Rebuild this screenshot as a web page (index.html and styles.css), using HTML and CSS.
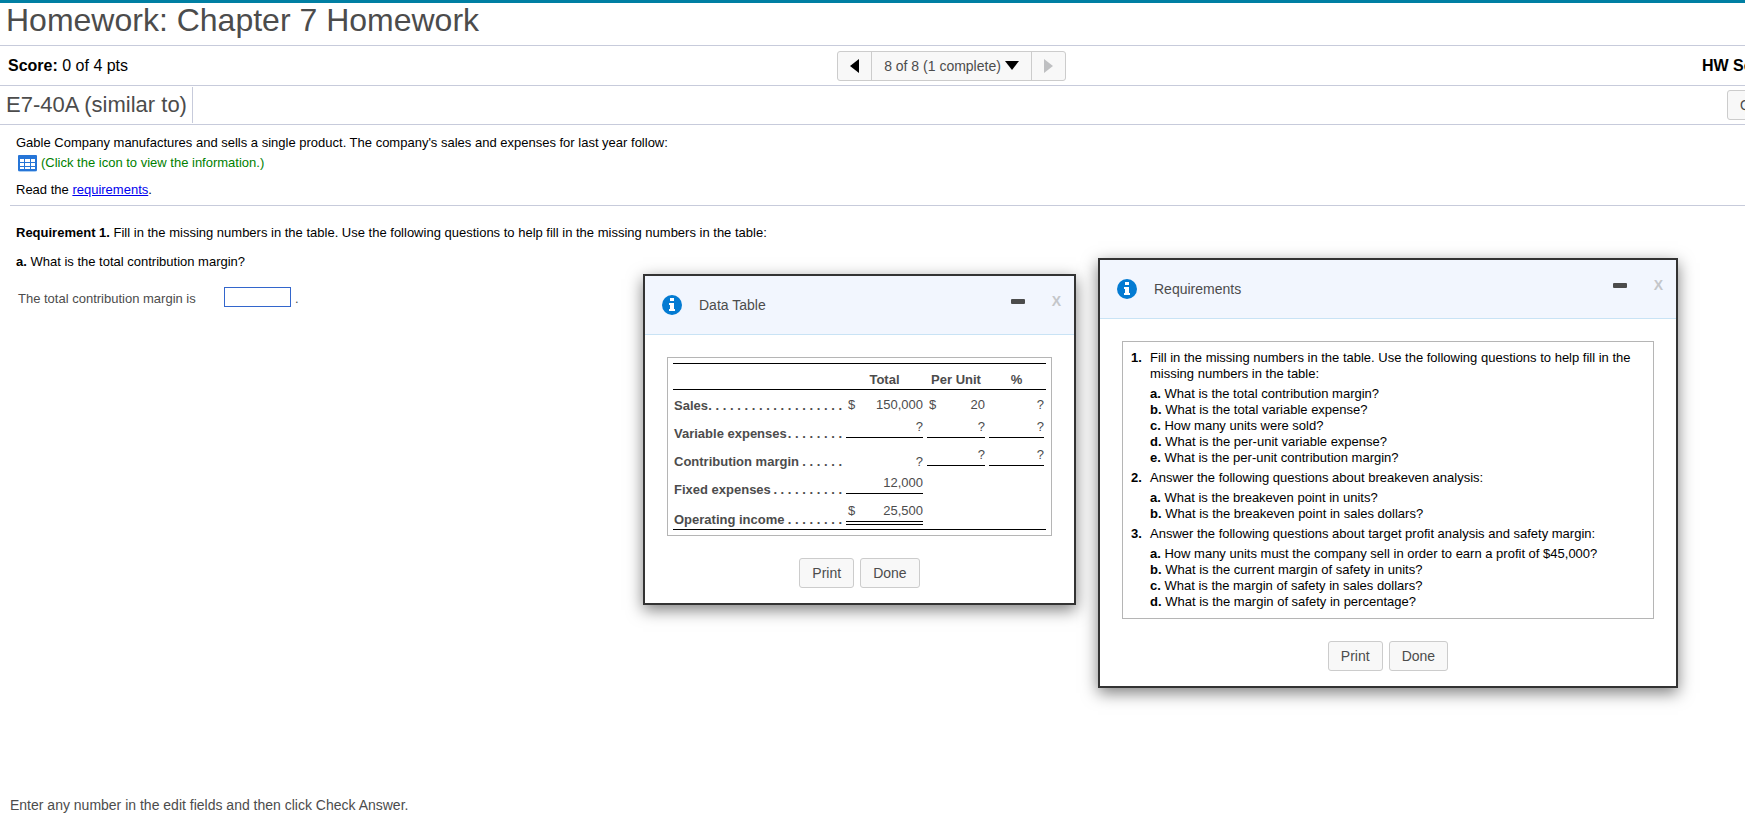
FILE: index.html
```html
<!DOCTYPE html>
<html lang="en">
<head>
    <meta charset="UTF-8">
    <meta name="viewport" content="width=device-width, initial-scale=1.0">
    <title>Homework: Chapter 7 Homework</title>
    <link rel="stylesheet" href="styles.css">
</head>
<body>
    <div class="page">
        <header class="title-bar">
            <h1>Homework: Chapter 7 Homework</h1>
        </header>

        <div class="score-bar">
            <div><b>Score:</b> 0 of 4 pts</div>
            <nav class="pager" aria-label="Questions">
                <button type="button" aria-label="Previous question">
                    <svg width="9" height="14" viewBox="0 0 9 14"><path d="M9 0v14L0 7z" fill="#000"/></svg>
                </button>
                <button type="button" class="pager-list">8 of 8 (1 complete)
                    <svg width="14" height="9" viewBox="0 0 14 9"><path d="M0 0h14L7 9z" fill="#000"/></svg>
                </button>
                <button type="button" aria-label="Next question" disabled>
                    <svg width="9" height="14" viewBox="0 0 9 14"><path d="M0 0v14l9-7z" fill="#bfc0c2"/></svg>
                </button>
            </nav>
            <div class="hw-score"><b>HW Score:</b></div>
        </div>

        <div class="exercise-bar">
            <h2>E7-40A (similar to)</h2>
            <button type="button" class="btn">Question Help</button>
        </div>

        <main>
            <section class="intro">
                <p>Gable Company manufactures and sells a single product. The company's sales and expenses for last year follow:</p>
                <p class="info">
                    <button type="button" class="table-icon" aria-label="View the information">
                        <svg width="19" height="17" viewBox="0 0 19 17">
                            <rect x="0" y="1" width="19" height="16" rx="2" fill="#a9cdf3"/>
                            <rect x="0" y="0" width="19" height="16" rx="1" fill="#2675d7"/>
                            <path d="M2 4h4v3H2zM7 4h5v3H7zM13 4h4v3h-4zM2 8h4v3H2zM7 8h5v3H7zM13 8h4v3h-4zM2 12h4v2H2zM7 12h5v2H7zM13 12h4v2h-4z" fill="#fff"/>
                        </svg>
                    </button>
                    (Click the icon to view the information.)
                </p>
                <p>Read the <a href="#requirements">requirements</a>.</p>
            </section>
            <section class="question">
                <p><b>Requirement 1.</b> Fill in the missing numbers in the table. Use the following questions to help fill in the missing numbers in the table:</p>
                <p><b>a.</b> What is the total contribution margin?</p>
                <div class="answer">
                    <label for="margin">The total contribution margin is</label>
                    <input type="text" id="margin">
                    <span>.</span>
                </div>
            </section>
        </main>

        <footer>Enter any number in the edit fields and then click Check Answer.</footer>
    </div>

    <section class="popup popup-data" aria-label="Data Table">
        <div class="popup-header">
            <svg width="20" height="20" viewBox="0 0 20 20"><circle cx="10" cy="10" r="10" fill="#047bd2"/><path d="M8 3h4v3H8zM7 8h5v6h1v2H7v-2h1v-4H7z" fill="#fff"/></svg>
            <h3>Data Table</h3>
            <button type="button" class="minimize" aria-label="Minimize"></button>
            <button type="button" class="close" aria-label="Close">X</button>
        </div>
        <div class="popup-body">
            <div class="box">
                <table>
                    <thead>
                        <tr>
                            <td></td>
                            <th class="total">Total</th>
                            <th class="unit">Per Unit</th>
                            <th class="percent">%</th>
                        </tr>
                    </thead>
                    <tbody>
                        <tr class="first">
                            <th scope="row"><div class="name"><span>Sales</span><span>. . . . . . . . . . . . . . . . . . .</span></div></th>
                            <td><div class="value"><span>$</span><span>150,000</span></div></td>
                            <td><div class="value"><span>$</span><span>20</span></div></td>
                            <td><div class="value">?</div></td>
                        </tr>
                        <tr>
                            <th scope="row"><div class="name"><span>Variable expenses</span><span>. . . . . . . .</span></div></th>
                            <td><div class="value line">?</div></td>
                            <td><div class="value line">?</div></td>
                            <td><div class="value line">?</div></td>
                        </tr>
                        <tr>
                            <th scope="row"><div class="name"><span>Contribution margin</span><span>. . . . . .</span></div></th>
                            <td><div class="value">?</div></td>
                            <td><div class="value line">?</div></td>
                            <td><div class="value line">?</div></td>
                        </tr>
                        <tr>
                            <th scope="row"><div class="name"><span>Fixed expenses</span><span>. . . . . . . . . .</span></div></th>
                            <td><div class="value line">12,000</div></td>
                            <td></td>
                            <td></td>
                        </tr>
                        <tr class="last">
                            <th scope="row"><div class="name"><span>Operating income</span><span>. . . . . . . .</span></div></th>
                            <td><div class="value double"><span>$</span><span>25,500</span></div></td>
                            <td></td>
                            <td></td>
                        </tr>
                    </tbody>
                </table>
            </div>
            <div class="buttons">
                <button type="button" class="btn">Print</button>
                <button type="button" class="btn">Done</button>
            </div>
        </div>
    </section>

    <section class="popup popup-req" id="requirements" aria-label="Requirements">
        <div class="popup-header">
            <svg width="20" height="20" viewBox="0 0 20 20"><circle cx="10" cy="10" r="10" fill="#047bd2"/><path d="M8 3h4v3H8zM7 8h5v6h1v2H7v-2h1v-4H7z" fill="#fff"/></svg>
            <h3>Requirements</h3>
            <button type="button" class="minimize" aria-label="Minimize"></button>
            <button type="button" class="close" aria-label="Close">X</button>
        </div>
        <div class="popup-body">
            <div class="box req-box">
                <ul class="req-list">
                    <li><b>1.</b>
                        <div>Fill in the missing numbers in the table. Use the following questions to help fill in the missing numbers in the table:
                            <ul>
                                <li><b>a.</b> What is the total contribution margin?</li>
                                <li><b>b.</b> What is the total variable expense?</li>
                                <li><b>c.</b> How many units were sold?</li>
                                <li><b>d.</b> What is the per-unit variable expense?</li>
                                <li><b>e.</b> What is the per-unit contribution margin?</li>
                            </ul>
                        </div>
                    </li>
                    <li><b>2.</b>
                        <div>Answer the following questions about breakeven analysis:
                            <ul>
                                <li><b>a.</b> What is the breakeven point in units?</li>
                                <li><b>b.</b> What is the breakeven point in sales dollars?</li>
                            </ul>
                        </div>
                    </li>
                    <li><b>3.</b>
                        <div>Answer the following questions about target profit analysis and safety margin:
                            <ul>
                                <li><b>a.</b> How many units must the company sell in order to earn a profit of $45,000?</li>
                                <li><b>b.</b> What is the current margin of safety in units?</li>
                                <li><b>c.</b> What is the margin of safety in sales dollars?</li>
                                <li><b>d.</b> What is the margin of safety in percentage?</li>
                            </ul>
                        </div>
                    </li>
                </ul>
            </div>
            <div class="buttons">
                <button type="button" class="btn">Print</button>
                <button type="button" class="btn">Done</button>
            </div>
        </div>
    </section>
</body>
</html>
```

FILE: styles.css
```css
* {
    box-sizing: border-box;
}
html {
    overflow: hidden;
}
body {
    margin: 0;
    background: #fff;
    color: #000;
    font-family: Arial, "Liberation Sans", sans-serif;
    font-size: 13px;
    line-height: 16px;
}
h1, h2, h3, p, ul {
    margin: 0;
    padding: 0;
    font-weight: normal;
}
ul {
    list-style: none;
}
button {
    font-family: inherit;
    font-size: 14px;
    color: #4c4c4c;
    cursor: pointer;
}

/* the page runs past the right edge of the window */
.page {
    display: flex;
    flex-direction: column;
    min-height: 100vh;
    margin-right: -158px;
    border-top: 3px solid #007fa3;
}
.title-bar {
    height: 43px;
    padding: 0 6px;
    border-bottom: 1px solid #c7cbdb;
}
h1 {
    font-size: 32px;
    line-height: 34px;
    color: #4c4c4c;
}
.score-bar {
    display: grid;
    grid-template-columns: 1fr auto 1fr;
    align-items: center;
    height: 40px;
    padding: 0 8px;
    border-bottom: 1px solid #c7cbdb;
    font-size: 16px;
}
.hw-score {
    justify-self: end;
    width: 193px;
}
.pager {
    display: flex;
    height: 30px;
    border: 1px solid #ccc;
    border-radius: 3px;
    background: #f8f8f8;
}
.pager button {
    display: flex;
    align-items: center;
    justify-content: center;
    gap: 4px;
    width: 33px;
    padding: 0;
    border: 0;
    background: none;
}
.pager .pager-list {
    width: 161px;
    border-left: 1px solid #ccc;
    border-right: 1px solid #ccc;
}
.exercise-bar {
    display: flex;
    align-items: center;
    justify-content: space-between;
    height: 39px;
    border-bottom: 1px solid #c7cbdb;
}
h2 {
    padding: 0 5px 0 6px;
    border-right: 1px solid #c7cbdb;
    font-size: 22px;
    line-height: 36px;
    color: #4c4c4c;
}
.exercise-bar .btn {
    width: 160px;
    margin-right: 16px;
    text-align: left;
}
.btn {
    height: 30px;
    padding: 0 12px;
    border: 1px solid #ccc;
    border-radius: 3px;
    background: #f8f8f8;
}

main {
    flex: 1;
    padding-left: 10px;
}
.intro {
    padding: 10px 6px 7px;
    border-bottom: 1px solid #c7cbdb;
}
.info {
    display: flex;
    gap: 4px;
    padding: 4px 2px 11px;
    color: #008000;
}
.table-icon {
    height: 16px;
    padding: 0;
    border: 0;
    background: none;
}
.intro a {
    color: #0000ee;
}
.question {
    padding: 19px 6px;
}
.question p {
    margin-bottom: 13px;
}
.answer {
    display: flex;
    align-items: flex-end;
    padding: 4px 2px;
    color: #4c4c4c;
}
.answer label {
    width: 206px;
}
.answer input {
    width: 67px;
    height: 20px;
    margin-right: 4px;
    border: 1px solid #3366cc;
}
footer {
    padding: 0 10px 2px;
    font-size: 14px;
    color: #4c4c4c;
}

/* floating windows */
.popup {
    position: absolute;
    border: 2px solid #333;
    background: #fff;
    box-shadow: 0 5px 15px rgba(0, 0, 0, 0.5);
}
.popup-data {
    top: 274px;
    left: 643px;
    width: 433px;
}
.popup-req {
    top: 258px;
    left: 1098px;
    width: 580px;
}
.popup-header {
    display: flex;
    align-items: center;
    height: 59px;
    padding: 0 13px 0 17px;
    border-bottom: 1px solid #c9e3f5;
    background: #f2f6fe;
}
h3 {
    flex: 1;
    padding-left: 17px;
    font-size: 14px;
    color: #4c4c4c;
}
.minimize {
    width: 14px;
    height: 5px;
    margin: 0 27px 7px 0;
    padding: 0;
    border: 0;
    border-radius: 1px;
    background: #4c4c4c;
}
.close {
    margin-bottom: 9px;
    padding: 0;
    border: 0;
    background: none;
    font-weight: bold;
    color: #c4c6ca;
}
.popup-body {
    padding: 22px 22px 15px;
}
.box {
    padding: 5px;
    border: 1px solid #b5b5b5;
}
.buttons {
    display: flex;
    justify-content: center;
    gap: 6px;
    margin-top: 22px;
}

table {
    width: 100%;
    border-top: 1px solid #000;
    border-bottom: 1px solid #000;
    border-spacing: 0;
    color: #4c4c4c;
}
th, td {
    padding: 0 2px;
    vertical-align: bottom;
}
tbody th {
    padding: 0 2px 0 1px;
}
thead th, thead td {
    height: 26px;
    padding-bottom: 1px;
    border-bottom: 1px solid #000;
}
.total {
    width: 81px;
}
.unit {
    width: 62px;
}
.percent {
    width: 59px;
}
tbody tr {
    height: 28px;
}
tbody .first {
    height: 24px;
}
.first td {
    padding-bottom: 1px;
}
tbody .last {
    height: 31px;
}
.last th, .last td {
    padding-bottom: 1px;
}
.name {
    display: flex;
    justify-content: space-between;
    white-space: nowrap;
}
.value {
    display: flex;
    justify-content: flex-end;
    padding-left: 2px;
}
.value span:first-child {
    flex: 1;
}
.line {
    margin-bottom: 4px;
    padding-bottom: 2px;
    border-bottom: 1px solid #000;
}
.double {
    margin-bottom: 3px;
    padding-bottom: 2px;
    border-bottom: 4px double #000;
}

.req-box {
    padding: 8px 8px 4px;
}
.req-list > li {
    display: flex;
}
.req-list > li > b {
    width: 19px;
}
.req-list > li > div {
    flex: 1;
}
.req-list ul {
    padding: 4px 0;
}
```
